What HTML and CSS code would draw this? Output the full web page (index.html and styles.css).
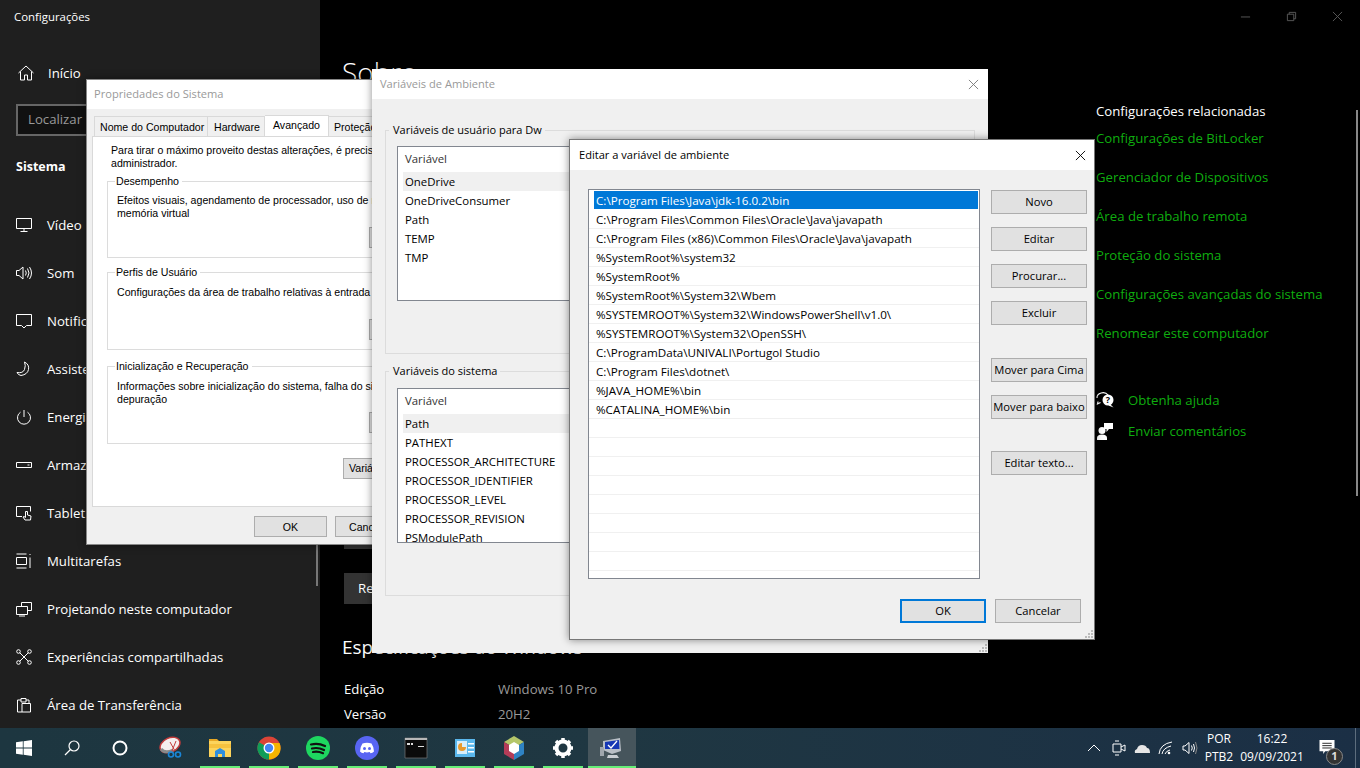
FILE: index.html
```html
<!DOCTYPE html>
<html lang="pt-BR">
<head>
<meta charset="utf-8">
<title>Configurações</title>
<link rel="stylesheet" href="styles.css">
</head>
<body>
<div class="desktop">
  <div class="settings">
    <nav class="sidebar">
      <div class="sb-title">Configurações</div>
      <div class="sb-row sb-home"><svg class="sb-ico" viewBox="0 0 16 16"><path d="M.5 8 8 1l7.500 7M2.500 6.500V15h4v-5h3v5h4V6.500"/></svg><span>Início</span></div>
      <div class="search">Localizar</div>
      <div class="sb-section">Sistema</div>
      <div class="sb-row"><svg class="sb-ico" viewBox="0 0 16 16"><path d="M.5 1.500h15v10H.5zM8 11.500v3M4.500 14.500h7"/></svg><span>Vídeo</span></div>
      <div class="sb-row"><svg class="sb-ico" viewBox="0 0 16 16"><path d="M.5 5.500h2.500L7 2v12L3 10.500H.5zM9.500 5.500q1.500 2.500 0 5M11.500 3.500q3 4.500 0 9M13.500 2q4 6 0 12"/></svg><span>Som</span></div>
      <div class="sb-row"><svg class="sb-ico" viewBox="0 0 16 16"><path d="M.5 1.500h15v11h-5L8 15l-2.500-2.500h-5z"/></svg><span>Notificações e ações</span></div>
      <div class="sb-row"><svg class="sb-ico" viewBox="0 0 16 16"><path d="M8.500 1q5 2.500 4 7.500T5 14.500Q2 14 1 11.500q6 1 7.500-3T8.500 1z"/></svg><span>Assistente de foco</span></div>
      <div class="sb-row"><svg class="sb-ico" viewBox="0 0 16 16"><path d="M8 1v7M4.500 3.200a6.500 6.500 0 1 0 7 0"/></svg><span>Energia e suspensão</span></div>
      <div class="sb-row"><svg class="sb-ico" viewBox="0 0 16 16"><path d="M.5 5.500h15v5H.5zM11.500 8h2"/></svg><span>Armazenamento</span></div>
      <div class="sb-row"><svg class="sb-ico" viewBox="0 0 16 16"><path d="M6 11.500H.5v-10h14v5M9 15l-2-3 1-.5 1.500 1V6.500h2V10l3.500 1-.5 4z"/></svg><span>Tablet</span></div>
      <div class="sb-row"><svg class="sb-ico" viewBox="0 0 16 16"><path d="M.5 1h10M.5 15h10M.5 4.500h10v7H.5zM14 1v1M14 4.500V15"/></svg><span>Multitarefas</span></div>
      <div class="sb-row"><svg class="sb-ico" viewBox="0 0 16 16"><path d="M5.500 5V1.500h10v8h-4M.5 5.500h11v8H.5zM3 15h6"/></svg><span>Projetando neste computador</span></div>
      <div class="sb-row"><svg class="sb-ico" viewBox="0 0 16 16"><path d="m3.500 3.500 9 9M12.500 3.500l-9 9"/><circle cx="2.500" cy="2.500" r="1.800"/><circle cx="13.500" cy="2.500" r="1.800"/><circle cx="2.500" cy="13.500" r="1.800"/><circle cx="13.500" cy="13.500" r="1.800"/></svg><span>Experiências compartilhadas</span></div>
      <div class="sb-row"><svg class="sb-ico" viewBox="0 0 16 16"><path d="M5 3H1.500v12H6M5 1.500h5V5H5zM10 3h3v3M6 6.500h8.500V15H6z"/></svg><span>Área de Transferência</span></div>
    </nav>
    <main class="main">
      <h1 class="main-h1">Sobre</h1>
      <div class="main-box"></div>
      <div class="main-btn">Renomear este computador</div>
      <h2 class="main-h2">Especificações do Windows</h2>
      <div class="spec"><span class="spec-k">Edição</span><span class="spec-v">Windows 10 Pro</span></div>
      <div class="spec"><span class="spec-k">Versão</span><span class="spec-v">20H2</span></div>
    </main>
    <aside class="aside">
      <div class="win-ctl">
        <span class="ctl"><svg viewBox="0 0 12 12"><path d="M1 6.500h10"/></svg></span>
        <span class="ctl"><svg viewBox="0 0 12 12"><path d="M1.500 3.500h7v7h-7zM3.500 3.500v-2h7v7h-2"/></svg></span>
        <span class="ctl"><svg viewBox="0 0 12 12"><path d="m1 1 10 10M11 1 1 11"/></svg></span>
      </div>
      <div class="rel-title">Configurações relacionadas</div>
      <div class="links">
        <a>Configurações de BitLocker</a>
        <a>Gerenciador de Dispositivos</a>
        <a>Área de trabalho remota</a>
        <a>Proteção do sistema</a>
        <a>Configurações avançadas do sistema</a>
        <a>Renomear este computador</a>
      </div>
      <div class="help">
        <div class="help-row"><svg class="help-ico" viewBox="0 0 18 18"><path class="w-s" d="M1 7a6 5 0 0 1 11-3"/><path class="w-s" d="M2 10.500 1.500 13l3-1.500"/><circle class="w-f" cx="12" cy="9" r="5.500"/><path class="w-f" d="m14 13 3.500 3.500-5-2z"/><text class="qmark" x="12" y="12">?</text></svg><a>Obtenha ajuda</a></div>
        <div class="help-row"><svg class="help-ico" viewBox="0 0 18 18"><circle class="w-f" cx="6" cy="8.500" r="3.500"/><path class="w-f" d="M1 18v-2q0-3.500 5-3.500t5 3.500v2z"/><path class="w-f" d="M8 1h9v6h-4l-2.500 3V7H8z"/></svg><a>Enviar comentários</a></div>
      </div>
    </aside>
    <div class="scroll-left"></div>
    <div class="scroll-right"></div>
  </div>

  <footer class="taskbar">
    <div class="tb-btn"><svg class="tb-ico" viewBox="0 0 16 16"><path class="w-f" d="M0 2.300 6.800 1.300V7.600H0zM7.600 1.200 16 0V7.600H7.600zM0 8.400H6.800V14.700L0 13.700zM7.600 8.400H16V16L7.600 14.800z"/></svg></div>
    <div class="tb-btn"><svg class="tb-ico" viewBox="0 0 16 16"><circle class="w-s" cx="10" cy="6" r="5"/><path class="w-s" d="M6.500 9.500 1 15"/></svg></div>
    <div class="tb-btn"><svg class="tb-ico" viewBox="0 0 16 16"><circle class="cortana" cx="8" cy="8" r="6.500"/></svg></div>
    <div class="tb-app tb-snip"><svg class="tb-app-ico" viewBox="0 0 24 24"><ellipse cx="11" cy="9" rx="10.500" ry="7" fill="#f4eeee" stroke="#c23b3b" stroke-width="1.500" transform="rotate(-25 11 9)"/><path d="M2 13q4 5 12 1" stroke="#8a8a8a" stroke-width="3" fill="none"/><path d="m11 6 5 9M17 5l-4 10" stroke="#c23b3b" fill="none"/><circle cx="12" cy="18.500" r="2.500" fill="none" stroke="#1b86d8" stroke-width="1.600"/><circle cx="19" cy="18.500" r="2.500" fill="none" stroke="#1b86d8" stroke-width="1.600"/></svg></div>
    <div class="tb-app"><svg class="tb-app-ico" viewBox="0 0 24 24"><path d="M1 3h8l2 2H1z" fill="#e8a825"/><path d="M1 5h22v16H1z" fill="#fcd45c"/><path d="M1 8h22v4H1z" fill="#f6c23e"/><path d="M7 21v-6l5-3 5 3v6h-3v-3h-4v3z" fill="#2f8fde"/></svg></div>
    <div class="tb-app"><svg class="tb-app-ico" viewBox="0 0 24 24"><circle cx="12" cy="12" r="11.500" fill="#db4437"/><path d="M12 12 2 6.200A11.500 11.500 0 0 0 12 23.500z" fill="#0f9d58"/><path d="M12 12V23.500A11.500 11.500 0 0 0 22.500 7H12z" fill="#f4b400"/><circle cx="12" cy="12" r="5.500" fill="#fff"/><circle cx="12" cy="12" r="4.200" fill="#4285f4"/></svg></div>
    <div class="tb-app"><svg class="tb-app-ico" viewBox="0 0 24 24"><circle cx="12" cy="12" r="12" fill="#1ed760"/><path d="M5 8.500q7-2 14 1.500M6 12.500q6-1.500 12 1.500M7 16q5-1 10 1.200" stroke="#111" stroke-width="2.200" stroke-linecap="round" fill="none"/></svg></div>
    <div class="tb-app"><svg class="tb-app-ico" viewBox="0 0 24 24"><circle cx="12" cy="12" r="12" fill="#5865f2"/><path d="M7.500 7.500q4.500-1.500 9 0 2.500 3.500 2.500 8-1.500 1.500-3.500 1.800l-.8-1.300q-2.700.8-5.400 0l-.8 1.300Q6.500 17 5 15.500q0-4.500 2.500-8z" fill="#fff"/><circle cx="9.500" cy="12.500" r="1.500" fill="#5865f2"/><circle cx="14.500" cy="12.500" r="1.500" fill="#5865f2"/></svg></div>
    <div class="tb-app"><svg class="tb-app-ico" viewBox="0 0 24 24"><path d="M1 2h22v20H1z" fill="#0b0b0b" stroke="#777" stroke-width=".7"/><path d="M1 2h22v2H1z" fill="#b8b8b8"/><path d="M3 7h3v2H3zM7 7h2v2H7zM14 10h6v1h-6z" fill="#ddd"/></svg></div>
    <div class="tb-app"><svg class="tb-app-ico" viewBox="0 0 24 24"><path d="M2 3h20v18H2z" fill="#5ab7ec"/><path d="M4 5h10v13H4z" fill="#d7eefb"/><path d="M9 7a4 4 0 1 0 4 4H9z" fill="#e99a2e"/><path d="M15 7h6v1.500h-6zM15 11h6v1.500h-6zM15 15h6v1.500h-6z" fill="#fff"/></svg></div>
    <div class="tb-app"><svg class="tb-app-ico" viewBox="0 0 24 24"><path d="M12 0 22 6 12 12 2 6z" fill="#b4c66a"/><path d="M2 6 12 12V24L2 18z" fill="#b43c58"/><path d="M22 6 12 12V24L22 18z" fill="#2f83c4"/><path d="M12 6 17 9 12 12 7 9zM7 9l5 3v6l-5-3zM17 9l-5 3v6l5-3z" fill="#fff"/></svg></div>
    <div class="tb-app"><svg class="tb-app-ico" viewBox="0 0 24 24"><circle class="gear-ring" cx="12" cy="12" r="6.500"/><path class="gear-teeth" d="M12 2v4M12 18v4M2 12h4M18 12h4M5 5l3 3M16 16l3 3M19 5l-3 3M8 16l-3 3"/></svg></div>
    <div class="tb-app tb-active"><svg class="tb-app-ico" viewBox="0 0 24 24"><path d="M3 14V5l17-3 1 13-9 3z" fill="#b9bfc6"/><path d="M5 13V6l14-2 .5 9z" fill="#1537b5"/><path d="m8 9 3 3 6-7" stroke="#fff" stroke-width="1.300" fill="none"/><path d="M8 19h9l2 3H7z" fill="#c9ced3"/><path d="M0 11h4v9H0z" fill="#9fa6ad"/></svg></div>
    <div class="tray">
      <svg class="tray-ico" viewBox="0 0 16 16"><path d="m2 11 6-6 6 6"/></svg>
      <svg class="tray-ico" viewBox="0 0 16 16"><path d="M5 1h4M5 15h4M3 4h8v8H3zM11 7l4-2v6l-4-2"/></svg>
      <svg class="tray-ico" viewBox="0 0 16 16"><path class="cloud" d="M1 13q-1-3 2-4 1-4 5-4t5 3q3 0 3 5z"/></svg>
      <svg class="tray-ico" viewBox="0 0 16 16"><path d="M1 14Q2 4 14 2M4 14q1-6 9-8M7 14q1-3 5-4"/><circle class="w-f" cx="11" cy="13" r="1.300"/></svg>
      <svg class="tray-ico" viewBox="0 0 16 16"><path d="M1 6h2l4-3.500v11L3 10H1zM9.500 5.500q1.500 2.500 0 5M11.500 4q2 4 0 8"/><path class="dim" d="M13.500 2q3 6 0 12"/></svg>
      <div class="lang"><span>POR</span><span>PTB2</span></div>
      <div class="clock"><span>16:22</span><span>09/09/2021</span></div>
      <div class="notif"><svg class="notif-ico" viewBox="0 0 16 16"><path class="w-f" d="M0 0h16v12H6l-2 3v-3H0z"/><path class="notif-l" d="M3 3.500h10M3 6h10M3 8.500h10"/></svg><span class="badge">1</span></div>
      <div class="show-desk"></div>
    </div>
  </footer>

  <section class="win win-prop">
    <div class="win-title dim-title prop-title">Propriedades do Sistema</div>
    <div class="prop-body">
      <div class="tabs">
        <span class="tab tab-1">Nome do Computador</span>
        <span class="tab tab-2">Hardware</span>
        <span class="tab tab-on">Avançado</span>
        <span class="tab tab-3">Proteção do Sistema</span>
      </div>
      <div class="panel">
        <p class="panel-p">Para tirar o máximo proveito destas alterações, é preciso fazer logon como<br>administrador.</p>
        <fieldset class="pgroup pg-1"><legend>Desempenho</legend><p>Efeitos visuais, agendamento de processador, uso de memória e<br>memória virtual</p><div class="pg-btn btn">Configurações</div></fieldset>
        <fieldset class="pgroup pg-2"><legend>Perfis de Usuário</legend><p>Configurações da área de trabalho relativas à entrada em logon</p><div class="pg-btn btn">Configurações</div></fieldset>
        <fieldset class="pgroup pg-3"><legend>Inicialização e Recuperação</legend><p>Informações sobre inicialização do sistema, falha do sistema e<br>depuração</p><div class="pg-btn btn">Configurações</div></fieldset>
        <div class="btn env-btn">Variáveis de Ambiente...</div>
      </div>
      <div class="prop-foot"><div class="btn prop-ok">OK</div><div class="btn prop-ok prop-cancel">Cancelar</div></div>
    </div>
  </section>

  <section class="win win-env">
    <div class="win-title dim-title">Variáveis de Ambiente<svg class="x dim-x" viewBox="0 0 12 12"><path d="m1 1 10 10M11 1 1 11"/></svg></div>
    <div class="env-body">
      <fieldset class="egroup egroup-1"><legend>Variáveis de usuário para Dw</legend>
        <div class="elist">
          <div class="ehead">Variável</div>
          <div class="erow erow-on">OneDrive</div>
          <div class="erow">OneDriveConsumer</div>
          <div class="erow">Path</div>
          <div class="erow">TEMP</div>
          <div class="erow">TMP</div>
        </div>
      </fieldset>
      <fieldset class="egroup egroup-2"><legend>Variáveis do sistema</legend>
        <div class="elist">
          <div class="ehead">Variável</div>
          <div class="erow erow-on">Path</div>
          <div class="erow">PATHEXT</div>
          <div class="erow">PROCESSOR_ARCHITECTURE</div>
          <div class="erow">PROCESSOR_IDENTIFIER</div>
          <div class="erow">PROCESSOR_LEVEL</div>
          <div class="erow">PROCESSOR_REVISION</div>
          <div class="erow">PSModulePath</div>
        </div>
      </fieldset>
    </div>
    <svg class="grip" viewBox="0 0 8 8"><path d="M6 0h2v2H6zM3 3h2v2H3zM6 3h2v2H6zM0 6h2v2H0zM3 6h2v2H3zM6 6h2v2H6z"/></svg>
  </section>

  <section class="win win-edit">
    <div class="win-title edit-title">Editar a variável de ambiente<svg class="x" viewBox="0 0 12 12"><path d="m1 1 10 10M11 1 1 11"/></svg></div>
    <div class="edit-body">
      <div class="edit-top">
        <div class="plist">
          <div class="prow prow-on">C:\Program Files\Java\jdk-16.0.2\bin</div>
          <div class="prow">C:\Program Files\Common Files\Oracle\Java\javapath</div>
          <div class="prow">C:\Program Files (x86)\Common Files\Oracle\Java\javapath</div>
          <div class="prow">%SystemRoot%\system32</div>
          <div class="prow">%SystemRoot%</div>
          <div class="prow">%SystemRoot%\System32\Wbem</div>
          <div class="prow">%SYSTEMROOT%\System32\WindowsPowerShell\v1.0\</div>
          <div class="prow">%SYSTEMROOT%\System32\OpenSSH\</div>
          <div class="prow">C:\ProgramData\UNIVALI\Portugol Studio</div>
          <div class="prow">C:\Program Files\dotnet\</div>
          <div class="prow">%JAVA_HOME%\bin</div>
          <div class="prow">%CATALINA_HOME%\bin</div>
          <div class="prow"></div><div class="prow"></div><div class="prow"></div><div class="prow"></div><div class="prow"></div><div class="prow"></div><div class="prow"></div><div class="prow"></div>
        </div>
        <div class="side-btns">
          <div class="btn sbtn">Novo</div>
          <div class="btn sbtn">Editar</div>
          <div class="btn sbtn">Procurar...</div>
          <div class="btn sbtn">Excluir</div>
          <div class="btn sbtn gap-a">Mover para Cima</div>
          <div class="btn sbtn">Mover para baixo</div>
          <div class="btn sbtn gap-b">Editar texto...</div>
        </div>
      </div>
      <div class="edit-foot"><div class="btn fbtn fbtn-def">OK</div><div class="btn fbtn">Cancelar</div></div>
    </div>
    <svg class="grip" viewBox="0 0 8 8"><path d="M6 0h2v2H6zM3 3h2v2H3zM6 3h2v2H6zM0 6h2v2H0zM3 6h2v2H3zM6 6h2v2H6z"/></svg>
  </section>
</div>
</body>
</html>
```
FILE: styles.css
```css
* { box-sizing: border-box; }
html, body { margin: 0; padding: 0; }
body { width: 1360px; height: 768px; overflow: hidden; background: #000; font-family: "Open Sans", "Noto Sans", "Liberation Sans", sans-serif; font-size: 11.4px; color: #000; }
p { margin: 0; }
svg { display: block; flex: none; }
.desktop { position: relative; width: 1360px; height: 768px; display: flex; flex-direction: column; overflow: hidden; }

.settings { position: relative; height: 728px; display: flex; background: #000; color: #fff; overflow: hidden; flex: none; }
.sidebar { width: 320px; flex: none; background: #1f1f1f; font-size: 13.200px; }
.sb-title { height: 32px; display: flex; align-items: center; padding-left: 14px; font-size: 11.400px; }
.sb-row { height: 48px; display: flex; align-items: center; padding-left: 16px; gap: 15px; white-space: nowrap; }
.sb-home { margin-top: 17px; padding-left: 18px; gap: 14px; }
.sb-ico { width: 16px; height: 16px; fill: none; stroke: #fff; stroke-width: 1; }
.search { margin: 7px 0 0 16px; width: 280px; height: 32px; border: 2px solid #666; background: #111; color: #999; font-size: 13.200px; padding-left: 10px; line-height: 26px; }
.sb-section { height: 60px; margin-bottom: 5px; display: flex; align-items: center; padding-left: 16px; font-weight: 700; font-size: 12.500px; }

.main { width: 760px; flex: none; padding-left: 22px; }
.main-h1 { margin: 52px 0 0; font-size: 28px; font-weight: 300; line-height: 40px; }
.main-box { margin: 437px 0 0 2px; width: 240px; height: 20px; background: #333; }
.main-btn { margin: 24px 0 0 2px; width: 240px; height: 31px; background: #333; font-size: 13.200px; line-height: 31px; padding-left: 14px; }
.main-h2 { margin: 28px 0 14px; font-size: 19px; font-weight: 400; line-height: 30px; }
.spec { height: 25px; display: flex; align-items: center; font-size: 13.200px; padding-left: 2px; }
.spec-k { width: 154px; }
.spec-v { color: #999; }

.aside { width: 280px; flex: none; }
.win-ctl { height: 32px; display: flex; justify-content: flex-end; }
.ctl { width: 46px; height: 32px; display: flex; align-items: center; justify-content: center; }
.ctl svg { width: 11px; height: 11px; fill: none; stroke: #5c5c5c; stroke-width: 1; }
.rel-title { margin: 68px 0 0 16px; height: 22px; line-height: 22px; font-size: 13.200px; }
.links { margin: 6px 0 0 16px; display: flex; flex-direction: column; gap: 19px; }
.links a, .help a { color: #0fad0f; font-size: 13.200px; line-height: 20px; height: 20px; white-space: nowrap; }
.help { margin: 47px 0 0 16px; display: flex; flex-direction: column; gap: 11px; }
.help-row { display: flex; align-items: center; gap: 14px; height: 20px; }
.help-ico { width: 18px; height: 18px; }
.w-f { fill: #fff; }
.w-s { fill: none; stroke: #fff; stroke-width: 1.200; }
.qmark { font-size: 9px; font-weight: 700; text-anchor: middle; fill: #000; }
.scroll-left { position: absolute; left: 316px; top: 545px; width: 2px; height: 41px; background: #777; }
.scroll-right { position: absolute; left: 1356px; top: 110px; width: 2px; height: 386px; background: #888; }

.taskbar { height: 40px; flex: none; display: flex; align-items: center; color: #fff; background: linear-gradient(90deg, #1d3640 0%, #1f3742 45%, #1b2f45 100%); position: relative; }
.tb-btn { width: 48px; height: 40px; display: flex; align-items: center; justify-content: center; }
.tb-ico { width: 16px; height: 16px; }
.cortana { fill: none; stroke: #fff; stroke-width: 2; }
.tb-app { width: 40px; height: 40px; margin-right: 9px; display: flex; align-items: center; justify-content: center; border-bottom: 2px solid #66ee77; padding-top: 2px; }
.tb-snip { margin-left: 7px; border-bottom-color: transparent; }
.tb-active { width: 48px; margin-left: -4px; margin-right: 0; background: #46555c; }
.tb-app-ico { width: 24px; height: 24px; }
.gear-ring { fill: none; stroke: #fff; stroke-width: 4; }
.gear-teeth { stroke: #fff; stroke-width: 3.500; fill: none; }
.tray { margin-left: auto; display: flex; align-items: center; height: 40px; }
.tray-ico { width: 16px; height: 16px; margin-right: 8px; fill: none; stroke: #fff; stroke-width: 1; }
.tray-ico .cloud { fill: #e6e6e6; stroke: none; }
.tray-ico .dim { stroke: #888; }
.tray-ico .w-f { stroke: none; }
.lang, .clock { display: flex; flex-direction: column; align-items: center; line-height: 18px; font-size: 12px; }
.lang { width: 34px; margin-left: -4px; }
.clock { width: 70px; margin-left: 1px; }
.notif { position: relative; width: 48px; padding-right: 8px; height: 40px; display: flex; align-items: center; justify-content: center; }
.notif-ico { width: 16px; height: 15px; margin-bottom: 2px; }
.notif-l { stroke: #222; stroke-width: 1; }
.badge { position: absolute; left: 19px; top: 20px; width: 17px; height: 17px; border-radius: 50%; background: #333; border: 1.500px solid #888; color: #ddd; font-size: 11px; font-weight: 700; line-height: 14px; text-align: center; }
.show-desk { width: 1px; height: 40px; background: #5d6d7d; margin-right: 4px; }

.win { position: absolute; background: #f0f0f0; box-shadow: 0 0 8px rgba(0,0,0,.45); }
.win-title { height: 30px; background: #fff; padding-left: 8px; line-height: 30px; font-size: 11.100px; display: flex; align-items: center; justify-content: space-between; }
.dim-title { color: #999; }
.x { width: 11px; height: 11px; margin-right: 9px; fill: none; stroke: #000; stroke-width: 1; }
.dim-x { stroke: #777; }
.btn { background: #e1e1e1; border: 1px solid #adadad; display: flex; align-items: center; justify-content: center; white-space: nowrap; }

.win-prop { left: 86px; top: 79px; width: 420px; height: 466px; border: 1px solid #888; border-right: 0; font-family: "Liberation Sans", Arial, sans-serif; font-size: 10.600px; }
.prop-title { height: 29px; padding: 0 0 2px 7px; font-family: "Open Sans", sans-serif; font-size: 11.100px; }
.prop-body { padding: 6px 5px 0; }
.tabs { display: flex; height: 21px; padding-left: 2px; align-items: flex-end; }
.tab { height: 20px; border: 1px solid #d9d9d9; border-bottom: 0; padding: 0 5px; line-height: 20px; white-space: nowrap; background: #f0f0f0; }
.tab-1 { width: 114px; }
.tab-2 { width: 57px; border-left: 0; padding-left: 6px; }
.tab-on { height: 22px; width: 64px; line-height: 18px; background: #fff; border-bottom: 1px solid #fff; margin-bottom: -1px; position: relative; border-left: 0; padding-left: 8px; }
.tab-3 { width: 120px; border-left: 0; }
.panel { position: relative; height: 371px; width: 406px; background: #fff; border: 1px solid #d9d9d9; padding: 7px 14px 0 18px; line-height: 13px; white-space: nowrap; }
.panel-p { height: 24px; }
.pgroup { position: relative; margin: 6px 0 0 -4px; padding: 6px 8px 0; width: 290px; min-width: 0; height: 84px; border: 1px solid #dcdcdc; line-height: 13px; background: #fff; }
.pgroup legend { padding: 0 3px 0 1px; margin-left: -1px; line-height: 14px; }
.pgroup p { padding-left: 1px; }
.pg-2 { height: 85px; margin-top: 7px; padding-top: 7px; }
.pg-3 { height: 85px; margin-top: 9px; padding-top: 7px; }
.pg-btn { position: absolute; left: 261px; top: 39px; width: 100px; height: 21px; }
.pg-2 .pg-btn { top: 40px; }
.env-btn { margin: 14px 0 0 232px; width: 150px; height: 21px; justify-content: flex-start; padding-left: 5px; }
.prop-foot { display: flex; gap: 8px; margin: 9px 0 0 162px; }
.prop-ok { width: 73px; height: 21px; }
.prop-cancel { justify-content: flex-start; padding-left: 13px; }

.win-env { left: 372px; top: 69px; width: 616px; height: 584px; }
.env-body { padding: 23px 13px 0; }
.egroup { position: relative; margin: 0; padding: 9px 11px 0; height: 232px; border: 1px solid #dcdcdc; min-width: 0; }
.egroup legend { padding: 0 3px 0 4px; margin-left: -8px; line-height: 16px; font-size: 11px; }
.egroup-1 { padding-top: 8px; }
.egroup-2 { margin-top: 9px; height: 233px; }
.elist { height: 155px; width: 400px; background: #fff; border: 1px solid #828790; padding: 0 5px; overflow: hidden; }
.ehead { height: 25px; line-height: 24px; padding-left: 2px; color: #333; }
.erow { height: 19px; line-height: 19px; padding-left: 2px; }
.erow-on { background: #f0f0f0; }

.win-edit { left: 569px; top: 139px; width: 526px; height: 501px; border: 1px solid #777; }
.edit-title { color: #000; padding-left: 9px; }
.edit-title .x { margin-right: 8px; }
.edit-body { padding: 19px 7px 0 18px; }
.edit-top { display: flex; gap: 11px; }
.plist { width: 392px; height: 390px; background: #fff; border: 1px solid #828790; padding-top: 1px; overflow: hidden; font-size: 11.650px; }
.prow { height: 19px; border-bottom: 1px solid #f0f0f0; line-height: 19px; padding-left: 7px; white-space: nowrap; }
.prow-on { background: #0078d7; color: #fff; border-bottom: 1px solid #fff; margin: 0 1px 0 5px; padding-left: 2px; }
.side-btns { display: flex; flex-direction: column; gap: 13px; padding-top: 1px; font-size: 11.200px; }
.sbtn { width: 96px; height: 24px; padding-bottom: 2px; }
.gap-a { margin-top: 20px; }
.gap-b { margin-top: 19px; }
.edit-foot { display: flex; gap: 9px; margin: 20px 0 0 312px; font-size: 11.200px; }
.fbtn { width: 86px; height: 24px; padding-bottom: 2px; }
.fbtn-def { border: 2px solid #0078d7; }
.grip { position: absolute; right: 1px; bottom: 1px; width: 8px; height: 8px; fill: #bbb; }
```
